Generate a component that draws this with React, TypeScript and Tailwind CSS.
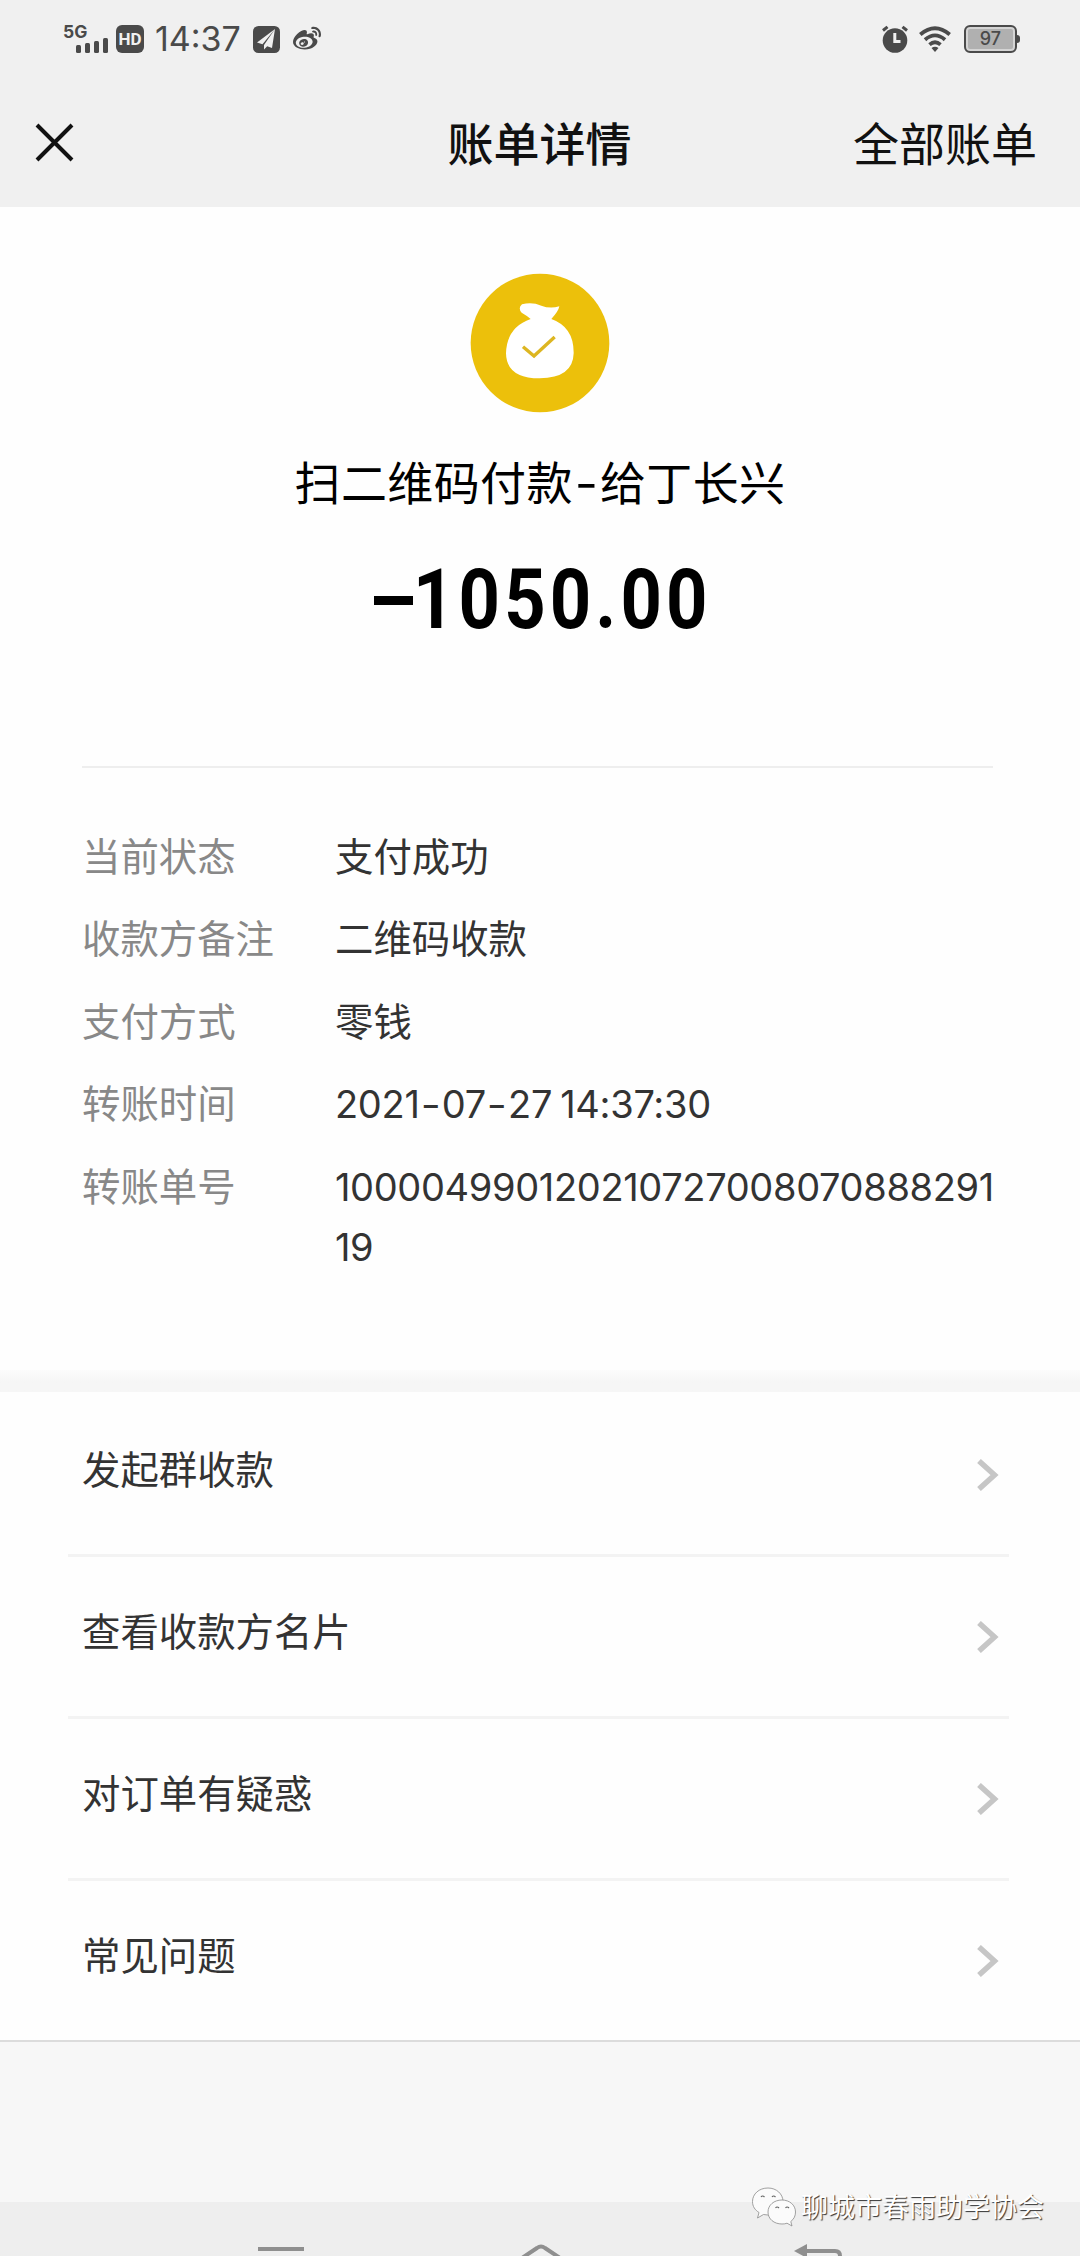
import { FaWeibo } from "react-icons/fa";

interface DetailRow {
  label: string;
  value: string;
}

const details: DetailRow[] = [
  { label: "当前状态", value: "支付成功" },
  { label: "收款方备注", value: "二维码收款" },
  { label: "支付方式", value: "零钱" },
];

const transferDate = ["2021", "07", "27"];
const transferTime = "14:37:30";
const transferNo = "10000499012021072700807088829119";

const actions = ["发起群收款", "查看收款方名片", "对订单有疑惑", "常见问题"];

function StatusBar() {
  return (
    <div className="flex h-[78px] items-center justify-between pl-[63px] pr-[60px] text-[#4a4a4a]">
      <div className="flex items-center">
        <div className="flex h-8 w-[45px] flex-col">
          <span className="h-[15px] font-[Inter,sans-serif] text-[17.5px] font-bold leading-[17px]">5G</span>
          <div className="flex h-[15px] items-end justify-end gap-[3.5px]">
            <span className="h-2 w-[5.5px] rounded-[1.5px] bg-[#4a4a4a]" />
            <span className="h-2.5 w-[5.5px] rounded-[1.5px] bg-[#4a4a4a]" />
            <span className="h-3 w-[5.5px] rounded-[1.5px] bg-[#4a4a4a]" />
            <span className="h-[15px] w-[5.5px] rounded-[1.5px] bg-[#4a4a4a]" />
          </div>
        </div>
        <div className="ml-2 flex h-7 w-7 items-center justify-center rounded-md bg-[#4a4a4a] font-[Roboto,sans-serif] text-[17px] font-bold leading-none text-[#f0f0f0]">
          HD
        </div>
        <div className="ml-[11px] w-[87px] whitespace-nowrap font-[Inter,sans-serif] text-[34px] leading-none">14:37</div>
        <svg className="ml-[11px]" width="27" height="27" viewBox="0 0 27 27">
          <rect width="27" height="27" rx="5.5" fill="#4a4a4a" />
          <path d="M22 3 4 16.5l5.5 1.8zM22 3 11 19v4.5l3.2-3.2L19 22z" fill="#f0f0f0" />
        </svg>
        <FaWeibo className="ml-[13px]" size={28} />
      </div>
      <div className="flex items-center">
        <svg width="28" height="28" viewBox="0 0 28 28" fill="none">
          <circle cx="14" cy="15.5" r="12.3" fill="#4a4a4a" />
          <path d="M2 5.5 6.5 1.8M26 5.5l-4.5-3.7" stroke="#4a4a4a" strokeWidth="3" />
          <path d="M13.8 8v8.5h5.7" stroke="#f0f0f0" strokeWidth="3" />
        </svg>
        <svg className="ml-[10px]" width="32" height="27" viewBox="0 0 32 27" fill="none" stroke="#4a4a4a" strokeWidth="3.8">
          <path d="M1.3 8.5Q16-4 30.7 8.5" />
          <path d="M6 13.7q10-8.6 20 0" />
          <path d="M10.5 18.6q5.5-4.6 11 0" />
          <path d="M16 26l-3.5-4q3.5-2.6 7 0z" fill="#4a4a4a" stroke="none" />
        </svg>
        <div className="ml-[13px] flex h-7 w-[53px] items-center justify-center rounded-[6px] border-2 border-[#4a4a4a] bg-[#b0b0b0] font-[Inter,sans-serif] text-[18px] font-medium leading-none shadow-[inset_0_0_0_2px_#d4d4d4]">
          97
        </div>
        <div className="h-2 w-[3px] rounded-r-sm bg-[#4a4a4a]" />
      </div>
    </div>
  );
}

function MoneyBag() {
  return (
    <svg width="140" height="140" viewBox="92 69 420 420">
      <circle cx="302" cy="279" r="208" fill="#ecc00b" />
      <path
        d="M248 163q30-8 58 4 26 10 54 2-2 14-24 38 68 24 67 103-2 74-102 75-100-1-101-75 2-78 74-103-14-12-27-19-12-14 1-25z"
        fill="#fff"
      />
      <path d="m251 290 33 28 62-57" fill="none" stroke="#ddb621" strokeWidth="10" />
    </svg>
  );
}

function Watermark() {
  return (
    <div className="absolute left-[751px] top-[2185px] flex items-center">
      <svg width="46" height="42" viewBox="0 0 46 42" fill="#fbfbfb" stroke="#8a8a8a" strokeWidth="0.8">
        <path d="M17 3C8 3 1.5 9 1.5 16.5c0 5 2.5 8.5 6.5 11L6.5 33l6-3.5c12 2.5 19.5-4.5 19.5-13C32 9 25.5 3 17 3z" />
        <path d="M31 15c-8 0-14 5-14 12s6 12 14 12c2 0 3.5-.2 5-.8l5 2.8-1.2-4.5C43 34 44.5 31 44.5 27c0-7-6-12-13.5-12z" />
        <path d="M10 12q1.5-2 3.5 0M21 12q1.5-2 3.5 0M24.5 23q1.5-2 3.5 0M34.5 23q1.5-2 3.5 0" fill="none" stroke="#666" strokeWidth="1.2" />
      </svg>
      <span className="ml-1 whitespace-nowrap text-[27px] leading-[40px] text-white [text-shadow:1px_1px_1px_#333]">
        聊城市春雨助学协会
      </span>
    </div>
  );
}

export default function App() {
  return (
    <div className="relative flex h-[2256px] w-[1080px] flex-col overflow-hidden bg-[#fefefe] font-['Noto_Sans_CJK_SC',sans-serif] text-[#333]">
      <header className="h-[207px] shrink-0 bg-[#f0f0f0]">
        <StatusBar />
        <div className="flex h-[128px] items-center justify-between pl-[35px] pr-[43px] text-[46px] leading-none text-[#111]">
          <svg className="mr-[152px]" width="39" height="39" viewBox="0 0 39 39" stroke="#111" strokeWidth="4">
            <path d="m2 2 35 35M37 2 2 37" />
          </svg>
          <h1 className="pb-[3px] font-medium">账单详情</h1>
          <span className="pb-[3px]">全部账单</span>
        </div>
      </header>

      <section className="flex h-[559px] shrink-0 flex-col items-center pt-[66px] text-black">
        <MoneyBag />
        <p className="mt-[32px] whitespace-nowrap text-[46px] leading-[70px] tracking-[0.4px]">
          扫二维码付款
          <span className="inline-block w-[27px] scale-x-110 text-center font-[Inter,sans-serif] leading-none">-</span>
          给丁长兴
        </p>
        <div className="ml-[10px] mt-[37px] flex items-center whitespace-nowrap font-[Roboto,sans-serif] text-[84px] font-bold leading-[96px]">
          <span className="h-[9px] w-[39px] bg-black" />
          <span className="w-[303px]">
            <span className="inline-block origin-left scale-x-[0.86] tracking-[4.8px]">1050.00</span>
          </span>
        </div>
      </section>

      <section className="ml-[82px] mr-[87px] flex h-[604px] shrink-0 flex-col gap-[22.4px] border-t-2 border-[#eee] pt-[56px] text-[38.4px] leading-[60px]">
        {details.map((row) => (
          <div key={row.label} className="flex">
            <span className="w-[253px] shrink-0 text-[#888]">{row.label}</span>
            <span>{row.value}</span>
          </div>
        ))}
        <div className="flex">
          <span className="w-[253px] shrink-0 text-[#888]">转账时间</span>
          <span className="-mb-[3px] mt-[3px] flex font-[Inter,sans-serif] text-[38px] tracking-[-0.3px]">
            {transferDate.map((part, i) => (
              <span key={i}>
                {i > 0 && <span className="mx-[2.5px] inline-block scale-x-115">-</span>}
                {part}
              </span>
            ))}
            <span className="ml-2">{transferTime}</span>
          </span>
        </div>
        <div className="flex">
          <span className="w-[253px] shrink-0 text-[#888]">转账单号</span>
          <span className="-mb-[3px] mt-[3px] w-[670px] shrink-0 break-all font-[Inter,sans-serif] text-[38px] tracking-[-0.35px]">
            {transferNo}
          </span>
        </div>
      </section>

      <div className="h-[22px] shrink-0 bg-linear-to-b from-[#fcfcfc] to-[#f6f6f6] to-50%" />

      <ul className="shrink-0 pt-[3px] text-[38.4px] leading-[60px]">
        {actions.map((action) => (
          <li key={action} className="group pl-[68px] pr-[71px] last:border-b-2 last:border-[#dcdcdc]">
            <div className="flex h-[162px] items-center justify-between border-b-[3px] border-[#f3f3f3] pl-[14px] group-last:h-[159px] group-last:border-0">
              <span className="pb-4">{action}</span>
              <svg className="mr-[10px]" width="22" height="32" viewBox="0 0 22 32" fill="none" stroke="#c6c6c6" strokeWidth="5.5">
                <path d="m2 2 15.5 14L2 30" />
              </svg>
            </div>
          </li>
        ))}
      </ul>

      <div className="flex-1 bg-[#f7f7f7]" />
      <nav className="h-[54px] shrink-0 bg-[#eee]">
        <svg width="1080" height="54" viewBox="0 0 1080 54" fill="none" stroke="#8f8f8f" strokeWidth="4">
          <path d="M258 47h46" />
          <path d="m516 60 21-14q4-3 8 0l21 14" />
          <path d="M803 49h32q5 0 5 5v6" />
          <path d="m794 49 13-7v14z" fill="#8f8f8f" stroke="none" />
        </svg>
      </nav>

      <Watermark />
    </div>
  );
}
